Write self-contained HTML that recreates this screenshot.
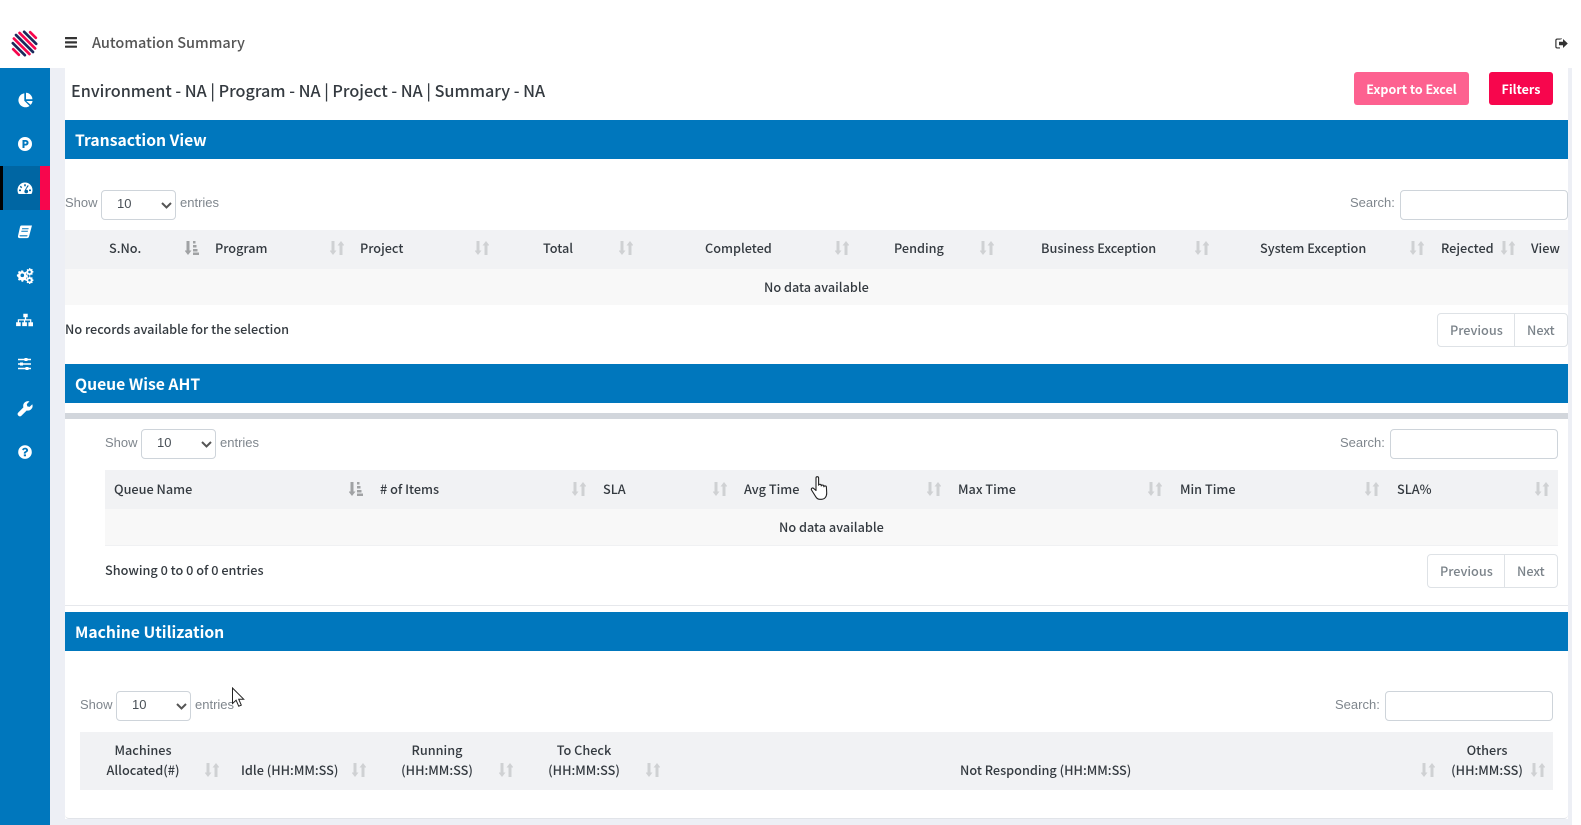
<!DOCTYPE html>
<html lang="en"><head><meta charset="utf-8"><title>Automation Summary</title>
<style>
*{box-sizing:border-box}
html,body{margin:0;padding:0;width:1581px;height:825px;overflow:hidden;background:#fff}
body{position:relative;font-family:"Noto Sans CJK JP","Liberation Sans",sans-serif;font-size:12.7px;color:#343a40;font-weight:500}
.a{position:absolute}
.t{position:absolute;white-space:nowrap;line-height:20px}
.c{transform:translateX(-50%);text-align:center}
.bar{position:absolute;left:65px;width:1503px;height:39px;background:#0077bd;color:#fff;font-size:15.7px;font-weight:700;line-height:39px;padding-left:10px}
.lab{position:absolute;white-space:nowrap;line-height:20px;font-family:"Liberation Sans",sans-serif;font-size:13px;font-weight:400;color:#7f868d}
select{position:absolute;width:75px;height:30px;border:1px solid #ced4da;border-radius:4px;background:#fff;appearance:none;-webkit-appearance:none;font:400 13px "Liberation Sans",sans-serif;color:#495057;padding:0 0 3px 15px;margin:0}
input{position:absolute;height:30px;border:1px solid #ced4da;border-radius:4px;background:#fff;margin:0;padding:0}
.chev{position:absolute;width:11px;height:7px}
.thead{position:absolute;background:#f1f2f4}
.trow{position:absolute;background:#f8f8f8}
.pg{position:absolute;height:34px;border:1px solid #dee2e6;border-radius:4px;background:#fff}
.pg i{position:absolute;top:0;bottom:0;width:1px;background:#dee2e6}
.pgt{position:absolute;white-space:nowrap;line-height:20px;color:#7b838a;font-weight:500}
.s{position:absolute;width:14px;height:14px;fill:#cfd1d3}
.s.on{fill:#a0a2a4}
.ic{position:absolute;left:15px;width:20px;height:20px;fill:#fff}
.btn{position:absolute;top:72px;height:33px;border-radius:3px;color:#fff;font-size:12.5px;font-weight:700;line-height:33px;text-align:center}
</style></head><body>
<svg width="0" height="0" style="position:absolute"><defs>
<symbol id="so" viewBox="0 0 14 14"><path d="M1.500 0h3v9.500H6.500L3 14-.5 9.500h2zM9.500 14h3V4.500h2L11 0 7.500 4.500h2z"/></symbol>
<symbol id="sa" viewBox="0 0 14 14"><path d="M1.500 0h3v9.500H6.500L3 14-.5 9.500h2zM8 0h2.500v2.500H8zM8 4h3.500v2.500H8zM8 8h4.500v2.500H8zM8 11.500h6V14H8z"/></symbol>
</defs></svg>

<!-- backgrounds -->
<div class="a" style="left:50px;top:68px;width:15px;height:757px;background:#edeff5"></div>
<div class="a" style="left:1568px;top:68px;width:4px;height:757px;background:#edeff5"></div>
<div class="a" style="left:65px;top:819px;width:1507px;height:6px;background:#edeff5"></div>
<div class="a" style="left:65px;top:812px;width:1503px;height:7px;border-bottom:1px solid #e1e4e9;border-radius:0 0 4px 4px"></div>

<!-- header -->
<svg class="a" style="left:11px;top:30px" width="27" height="27" viewBox="0 0 27 27">
<g stroke-width="2.700" stroke-linecap="round" fill="none" transform="rotate(45 13.500 13.500)">
<path d="M9.500 1.500h8" stroke="#f7064d"/>
<path d="M5 5.500h17" stroke="#1b2a5c"/>
<path d="M2.500 9.500h22" stroke="#f7064d"/>
<path d="M1.500 13.500h24" stroke="#1b2a5c"/>
<path d="M2.500 17.500h22" stroke="#f7064d"/>
<path d="M5 21.500h17" stroke="#1b2a5c"/>
<path d="M9.500 25.500h8" stroke="#f7064d"/>
</g></svg>
<svg class="a" style="left:65px;top:37px" width="12" height="11" viewBox="0 0 12 11" fill="#333"><rect width="12" height="2.200" rx=".5"/><rect y="4.300" width="12" height="2.200" rx=".5"/><rect y="8.600" width="12" height="2.200" rx=".5"/></svg>
<div class="t" style="left:92px;top:33px;font-size:14.5px;font-weight:500;color:#555">Automation Summary</div>
<svg class="a" style="left:1555px;top:38px" width="13" height="11" viewBox="0 0 13 11" fill="#333"><path d="M7 1V.5H2.200C1 .5.300 1.300.3 2.300v6.400c0 1 .7 1.800 1.900 1.800H5V9.400H2.400c-.5 0-.9-.4-.9-.9V2.500c0-.5.4-.9.900-.9H5"/><path d="M4 3.700h4V1L12.800 5.500 8 10V7.300H4z"/></svg>

<!-- sidebar -->
<div class="a" style="left:0;top:68px;width:50px;height:757px;background:#0077bd"></div>
<div class="a" style="left:0;top:166px;width:50px;height:44px;background:#0066a3"></div>
<div class="a" style="left:0;top:166px;width:3px;height:44px;background:#000"></div>
<div class="a" style="left:40px;top:166px;width:10px;height:44px;background:#f7064d"></div>
<svg class="ic" style="top:90px" viewBox="0 0 20 20"><path d="M9.300 3.200v7.500l5.300 5.300A7.100 7.100 0 1 1 9.300 3.200z"/><path d="M11 2.800a6.600 6.600 0 0 1 6.400 6.400H11zM11.300 11h6.300a7 7 0 0 1-1.900 3.900z"/></svg>
<svg class="ic" style="top:134px" viewBox="0 0 20 20"><path fill-rule="evenodd" d="M10 3a7 7 0 1 1 0 14 7 7 0 0 1 0-14zM7.500 6v8h2v-2.500h1.300a2.750 2.750 0 0 0 0-5.500zM9.500 7.800h1.100a.95.95 0 0 1 0 1.900H9.500z"/></svg>
<svg class="ic" style="top:179px" viewBox="0 0 20 20"><path fill-rule="evenodd" d="M10 3.500a7.500 7.500 0 0 1 7.500 7.500c0 1.500-.4 3-1.100 4H3.600C2.900 14 2.500 12.500 2.500 11A7.500 7.500 0 0 1 10 3.500zM9.200 5.300v2h1.600v-2zM5.800 6.800l-1 1 1.400 1.400 1-1zM4 10.500v1.600h2v-1.600zM14 10.500v1.600h2v-1.600zM13.800 6.800L10.900 10.600a1.900 1.900 0 1 1-1.300.9l3-5.200z"/></svg>
<svg class="ic" style="top:222px" viewBox="0 0 20 20"><path fill-rule="evenodd" d="M6.500 3.500H17l-.4 1.400-2.600 9.700c-.2.800-.9 1.500-1.900 1.500H4.700c-1.300 0-2-.9-1.700-2.100L5 5c.2-.9.700-1.500 1.500-1.500zM7.200 6.200l-.3 1h6.500l.3-1zM6.500 8.700l-.3 1h6.500l.3-1zM4.700 13.300c-.2.700 0 1.100.6 1.100h6.300c.4 0 .7-.1.800-.5l.1-.6z"/></svg>
<svg class="ic" style="left:16px;top:266px;width:18px;height:18px" viewBox="0 0 20 20"><path fill-rule="evenodd" d="M7 5l1 .1.400 1.500 1 .5 1.400-.7 1.200 1.300-.7 1.300.4 1 1.500.5v1.800l-1.500.4-.4 1 .7 1.400-1.300 1.200-1.300-.7-1 .4-.5 1.500H6.200l-.4-1.500-1-.4-1.400.7-1.200-1.300.7-1.300-.4-1L1 11.300V9.500l1.500-.4.400-1-.7-1.400L3.500 5.500l1.300.7 1-.4.500-1.500zM7 8.400a2 2 0 1 0 0 4 2 2 0 0 0 0-4z"/><path fill-rule="evenodd" d="M15 2.200l.9.100.2 1 .7.300.9-.5.9.9-.5.900.3.700 1 .2v1.300l-1 .3-.3.700.5.900-.9.900-.9-.5-.7.300-.2 1h-1.300l-.3-1-.7-.3-.9.500-.9-.9.500-.9-.3-.7-1-.3V6.100l1-.2.300-.7-.5-.9.900-.9.900.5.700-.3.300-1zM15 5.200a1.400 1.400 0 1 0 0 2.800 1.400 1.400 0 0 0 0-2.800zM15 11.500l.9.1.2 1 .7.300.9-.5.9.9-.5.900.3.700 1 .2v1.300l-1 .3-.3.700.5.900-.9.900-.9-.5-.7.300-.2 1h-1.300l-.3-1-.7-.3-.9.500-.9-.9.500-.9-.3-.7-1-.3v-1.300l1-.2.300-.7-.5-.9.900-.9.900.5.700-.3.300-1zM15 14.400a1.400 1.400 0 1 0 0 2.800 1.400 1.400 0 0 0 0-2.800z"/></svg>
<svg class="ic" style="top:310px" viewBox="0 0 20 20"><path d="M7.800 3.500h4.400v3.600h-1.500v2h5.100v3h1.700v3.900h-4.600V12h1.700v-1.700h-4.900V12h1.700v3.900H6.700V12h1.700v-1.700H3.500V12h1.700v3.900H.6V12h1.700V9.100h7V7.100H7.800z" transform="translate(.5 .2)"/></svg>
<svg class="ic" style="top:354px" viewBox="0 0 20 20"><path fill-rule="evenodd" d="M3 4.800h6.500V4h3v.8H16V6.200h-3.500V7h-3v-.8H3zM3 9.300h2V8.500h3v.8h8v1.400H8v.8H5v-.8H3zM3 13.800h7.500V13h3v.8H16v1.400h-2.500v.8h-3v-.8H3z"/></svg>
<svg class="ic" style="top:399px" viewBox="0 0 20 20"><path d="M17.300 5.200l-2.700 2.700-2.300-.5-.5-2.300 2.700-2.700a4.800 4.800 0 0 0-6.100 6L3.200 13.600a2 2 0 0 0 0 2.900l.3.300a2 2 0 0 0 2.900 0l5.300-5.300a4.800 4.800 0 0 0 5.600-6.300z"/></svg>
<svg class="ic" style="top:442px" viewBox="0 0 20 20"><path fill-rule="evenodd" d="M10 3.300a6.800 6.800 0 1 1 0 13.600 6.800 6.800 0 0 1 0-13.600zM10.100 5.800c-1.500 0-2.500.7-3 1.800l1.400.9c.3-.6.700-1.100 1.500-1.100.6 0 1.100.3 1.100.8 0 .5-.4.700-1 1.100-.7.400-1.300.9-1.300 2v.3h1.800c0-.6.400-.8 1-1.200.8-.5 1.500-1 1.500-2.100 0-1.500-1.500-2.500-3-2.500zM8.800 12.400v1.800h2.200v-1.800z"/></svg>

<!-- top row -->
<div class="t" style="left:71px;top:80px;font-size:16.2px;font-weight:500;color:#343a40">Environment - NA | Program - NA | Project - NA | Summary - NA</div>
<div class="btn" style="left:1354px;width:115px;background:#fd6190">Export to Excel</div>
<div class="btn" style="left:1489px;width:64px;background:#f7064d">Filters</div>

<!-- Transaction -->
<div class="bar" style="top:120px">Transaction View</div>
<div class="lab" style="left:65px;top:193px">Show</div>
<select style="left:101px;top:190px"><option>10</option></select>
<svg class="chev" style="left:161px;top:202px" viewBox="0 0 11 7"><path d="M1 1l4.500 4.500L10 1" fill="none" stroke="#555" stroke-width="2"/></svg>
<div class="lab" style="left:180px;top:193px">entries</div>
<div class="lab" style="left:1350px;top:193px">Search:</div>
<input style="left:1400px;top:190px;width:168px">
<div class="thead" style="left:65px;top:230px;width:1503px;height:39px"></div>
<div class="trow" style="left:65px;top:269px;width:1503px;height:36px"></div>
<div class="t" style="left:109px;top:238px">S.No.</div><svg class="s on" style="left:185px;top:241px"><use href="#sa"/></svg>
<div class="t" style="left:215px;top:238px">Program</div><svg class="s" style="left:330px;top:241px"><use href="#so"/></svg>
<div class="t" style="left:360px;top:238px">Project</div><svg class="s" style="left:475px;top:241px"><use href="#so"/></svg>
<div class="t" style="left:543px;top:238px">Total</div><svg class="s" style="left:619px;top:241px"><use href="#so"/></svg>
<div class="t" style="left:705px;top:238px">Completed</div><svg class="s" style="left:835px;top:241px"><use href="#so"/></svg>
<div class="t" style="left:894px;top:238px">Pending</div><svg class="s" style="left:980px;top:241px"><use href="#so"/></svg>
<div class="t" style="left:1041px;top:238px">Business Exception</div><svg class="s" style="left:1195px;top:241px"><use href="#so"/></svg>
<div class="t" style="left:1260px;top:238px">System Exception</div><svg class="s" style="left:1410px;top:241px"><use href="#so"/></svg>
<div class="t" style="left:1441px;top:238px">Rejected</div><svg class="s" style="left:1501px;top:241px"><use href="#so"/></svg>
<div class="t" style="left:1531px;top:238px">View</div>
<div class="t" style="left:764px;top:277px">No data available</div>
<div class="t" style="left:65px;top:319px">No records available for the selection</div>
<div class="pg" style="left:1437px;top:313px;width:131px"><i style="left:76px"></i></div>
<div class="pgt" style="left:1450px;top:320px">Previous</div><div class="pgt" style="left:1527px;top:320px">Next</div>

<!-- Queue -->
<div class="bar" style="top:364px">Queue Wise AHT</div>
<div class="a" style="left:65px;top:413px;width:1503px;height:6px;background:#d2d6dc"></div>
<div class="lab" style="left:105px;top:433px">Show</div>
<select style="left:141px;top:429px"><option>10</option></select>
<svg class="chev" style="left:201px;top:441px" viewBox="0 0 11 7"><path d="M1 1l4.500 4.500L10 1" fill="none" stroke="#555" stroke-width="2"/></svg>
<div class="lab" style="left:220px;top:433px">entries</div>
<div class="lab" style="left:1340px;top:433px">Search:</div>
<input style="left:1390px;top:429px;width:168px">
<div class="thead" style="left:105px;top:470px;width:1453px;height:39px"></div>
<div class="trow" style="left:105px;top:509px;width:1453px;height:37px;border-bottom:1px solid #f0f1f3"></div>
<div class="t" style="left:114px;top:479px">Queue Name</div><svg class="s on" style="left:349px;top:482px"><use href="#sa"/></svg>
<div class="t" style="left:380px;top:479px"># of Items</div><svg class="s" style="left:572px;top:482px"><use href="#so"/></svg>
<div class="t" style="left:603px;top:479px">SLA</div><svg class="s" style="left:713px;top:482px"><use href="#so"/></svg>
<div class="t" style="left:744px;top:479px">Avg Time</div><svg class="s" style="left:927px;top:482px"><use href="#so"/></svg>
<div class="t" style="left:958px;top:479px">Max Time</div><svg class="s" style="left:1148px;top:482px"><use href="#so"/></svg>
<div class="t" style="left:1180px;top:479px">Min Time</div><svg class="s" style="left:1365px;top:482px"><use href="#so"/></svg>
<div class="t" style="left:1397px;top:479px">SLA%</div><svg class="s" style="left:1535px;top:482px"><use href="#so"/></svg>
<div class="t" style="left:779px;top:517px">No data available</div>
<div class="t" style="left:105px;top:560px">Showing 0 to 0 of 0 entries</div>
<div class="pg" style="left:1427px;top:554px;width:131px"><i style="left:76px"></i></div>
<div class="pgt" style="left:1440px;top:561px">Previous</div><div class="pgt" style="left:1517px;top:561px">Next</div>
<div class="a" style="left:65px;top:605px;width:1503px;height:1px;background:#e6e8ec"></div>

<!-- Machine -->
<div class="bar" style="top:612px">Machine Utilization</div>
<div class="lab" style="left:80px;top:695px">Show</div>
<select style="left:116px;top:691px"><option>10</option></select>
<svg class="chev" style="left:176px;top:703px" viewBox="0 0 11 7"><path d="M1 1l4.500 4.500L10 1" fill="none" stroke="#555" stroke-width="2"/></svg>
<div class="lab" style="left:195px;top:695px">entries</div>
<div class="lab" style="left:1335px;top:695px">Search:</div>
<input style="left:1385px;top:691px;width:168px">
<div class="thead" style="left:80px;top:732px;width:1473px;height:58px"></div>
<div class="t c" style="left:143px;top:740px">Machines</div><div class="t c" style="left:143px;top:760px">Allocated(#)</div><svg class="s" style="left:205px;top:763px"><use href="#so"/></svg>
<div class="t" style="left:241px;top:760px">Idle (HH:MM:SS)</div><svg class="s" style="left:352px;top:763px"><use href="#so"/></svg>
<div class="t c" style="left:437px;top:740px">Running</div><div class="t c" style="left:437px;top:760px">(HH:MM:SS)</div><svg class="s" style="left:499px;top:763px"><use href="#so"/></svg>
<div class="t c" style="left:584px;top:740px">To Check</div><div class="t c" style="left:584px;top:760px">(HH:MM:SS)</div><svg class="s" style="left:646px;top:763px"><use href="#so"/></svg>
<div class="t" style="left:960px;top:760px">Not Responding (HH:MM:SS)</div><svg class="s" style="left:1421px;top:763px"><use href="#so"/></svg>
<div class="t c" style="left:1487px;top:740px">Others</div><div class="t c" style="left:1487px;top:760px">(HH:MM:SS)</div><svg class="s" style="left:1531px;top:763px"><use href="#so"/></svg>

<!-- cursors -->
<svg class="a" style="left:231px;top:687px" width="15" height="22" viewBox="0 0 15 22"><path d="M1.500 1v15.500l3.600-3.300 2.600 6 2.600-1.100-2.600-5.900h5z" fill="#fff" stroke="#222" stroke-width="1"/></svg>
<svg class="a" style="left:810px;top:475px" width="20" height="26" viewBox="0 0 20 26"><path d="M6 3a1.300 1.300 0 0 1 2.600 0v7.200c0-1.200 2.500-1.200 2.600 0v.8c0-1.200 2.500-1.200 2.600 0v.8c.1-1.200 2.500-1.200 2.600.2l.3 6c0 3.500-1.800 6.300-5.200 6.300H10c-2 0-3.300-1-4.200-2.500L1.500 15c-.7-1.300.9-2.600 2-1.700L6 15.500z" fill="#fff" stroke="#222" stroke-width="1.100" stroke-linejoin="round"/></svg>
</body></html>
